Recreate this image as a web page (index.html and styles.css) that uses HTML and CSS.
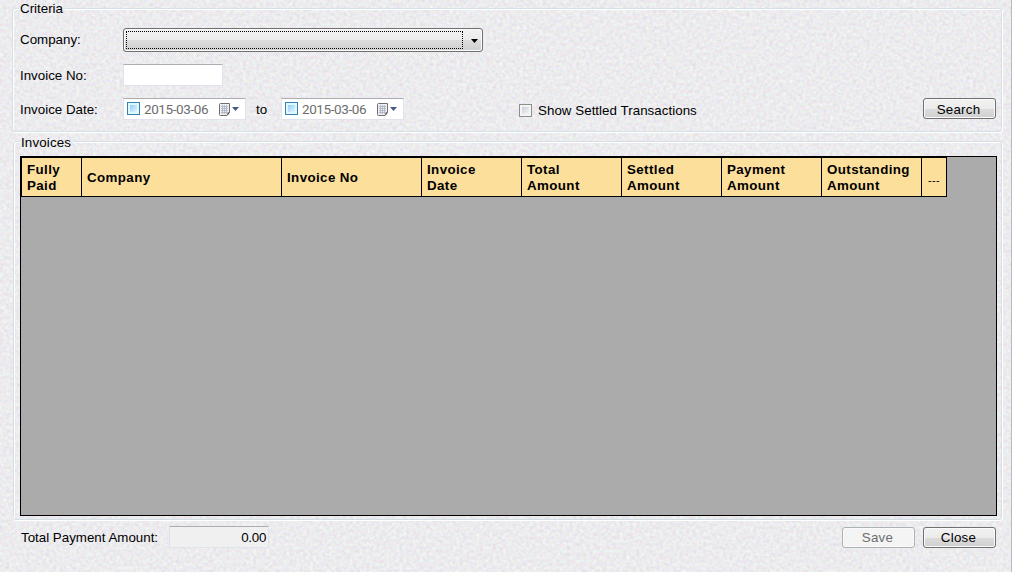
FILE: index.html
```html
<!DOCTYPE html>
<html lang="en">
<head>
<meta charset="utf-8">
<title>Invoices</title>
<link rel="stylesheet" href="styles.css">
</head>
<body>
<svg class="texture" width="1012" height="572" aria-hidden="true">
  <filter id="grain" x="0" y="0" width="100%" height="100%" color-interpolation-filters="sRGB">
    <feTurbulence type="fractalNoise" baseFrequency="0.3" numOctaves="2" seed="4"/>
    <feColorMatrix values="0.11 0.05 0 0 0.845  0 0.15 0 0 0.847  0 0.05 0.11 0 0.853  0 0 0 0 1"/>
  </filter>
  <rect width="1012" height="572" filter="url(#grain)"/>
</svg>
<main class="form">
  <section class="group criteria">
    <h2 class="legend">Criteria</h2>
    <div class="row row-company">
      <span class="label">Company:</span>
      <div class="combo"><span class="focus"></span><svg width="7" height="4"><path d="M0 0H7L3.5 4Z" fill="#000"/></svg></div>
    </div>
    <div class="row row-number">
      <span class="label">Invoice No:</span>
      <div class="field invoice-no"></div>
    </div>
    <div class="row row-date">
      <span class="label">Invoice Date:</span>
      <div class="field date"><span class="check blue"></span><span class="value">2015-03-06</span>
        <svg class="cal" width="22" height="14" viewBox="0 0 22 14"><path d="M.5 1.5Q.5 .5 1.5 .5H10.500V9L8 12.500H1.500Q.5 12.500 .5 11.500Z" fill="#edf0f5" stroke="#756b6b"/><path d="M11 9.500L8.500 12.500V9.500Z" fill="#564b4b"/><path d="M2 3.500H9M2 5.500H9M2 7.500H9M2 9.500H8M3.500 2V11M5.500 2V11M7.500 2V11" stroke="#a9b1c0" stroke-width=".8"/><path d="M13 4H20L16.500 8Z" fill="#465a85"/></svg></div>
      <span class="to">to</span>
      <div class="field date"><span class="check blue"></span><span class="value">2015-03-06</span>
        <svg class="cal" width="22" height="14" viewBox="0 0 22 14"><path d="M.5 1.5Q.5 .5 1.5 .5H10.500V9L8 12.500H1.500Q.5 12.500 .5 11.500Z" fill="#edf0f5" stroke="#756b6b"/><path d="M11 9.500L8.500 12.500V9.500Z" fill="#564b4b"/><path d="M2 3.500H9M2 5.500H9M2 7.500H9M2 9.500H8M3.500 2V11M5.500 2V11M7.500 2V11" stroke="#a9b1c0" stroke-width=".8"/><path d="M13 4H20L16.500 8Z" fill="#465a85"/></svg></div>
      <div class="settled"><span class="check"></span><span>Show Settled Transactions</span></div>
      <button class="button search">Search</button>
    </div>
  </section>
  <section class="group invoices">
    <h2 class="legend">Invoices</h2>
    <div class="grid">
      <div class="head">
        <div class="cell">Fully<br>Paid</div>
        <div class="cell">Company</div>
        <div class="cell">Invoice No</div>
        <div class="cell">Invoice<br>Date</div>
        <div class="cell">Total<br>Amount</div>
        <div class="cell">Settled<br>Amount</div>
        <div class="cell">Payment<br>Amount</div>
        <div class="cell">Outstanding<br>Amount</div>
        <div class="cell more">---</div>
      </div>
    </div>
  </section>
  <footer class="footer">
    <span class="total-label">Total Payment Amount:</span>
    <div class="field total">0.00</div>
    <button class="button save" disabled>Save</button>
    <button class="button close">Close</button>
  </footer>
</main>
</body>
</html>
```

FILE: styles.css
```css
* { box-sizing: border-box; }
body {
  margin: 0;
  width: 1012px;
  height: 572px;
  overflow: hidden;
  font: 13.33px/16px "Liberation Sans", Arial, sans-serif;
  color: #000;
  background: #ebebec;
}
svg { display: block; flex: none; }
.texture { position: absolute; left: 0; top: 0; }
.form {
  position: relative;
  height: 572px;
  padding: 0 9px 0 12px;
  border-right: 1px solid #b9bdc2;
}
.group { position: relative; width: 990px; }
.group::before {
  content: "";
  position: absolute;
  inset: 8px 0 0 0;
  border: 1px solid #d5dfe8;
  border-radius: 3px;
  box-shadow: 1px 1px 0 #fff, inset 1px 1px 0 #fff;
  clip-path: polygon(0 0, 7px 0, 7px 3px, var(--gap) 3px, var(--gap) 0, 101% 0, 101% 102%, 0 102%);
}
.criteria { --gap: 53px; height: 132px; padding: 0 6px 0 8px; }
.invoices { --gap: 61px; width: 989px; height: 388px; margin-left: 1px; padding-left: 7px; }
.invoices::before { top: 9px; }
.legend { position: relative; margin: 0; height: 16px; font: inherit; }
.criteria .legend { padding-top: 1px; }
.invoices .legend { padding: 3px 0 0 1px; height: 24px; letter-spacing: .15px; }
.row { position: relative; display: flex; align-items: center; }
.label { width: 103px; }
.row-number .label, .row-date .label { padding-top: 2px; }
.row-company { margin-top: 12px; height: 24px; }
.row-number { margin-top: 12px; height: 22px; }
.row-date { margin-top: 12px; height: 22px; }
.combo {
  display: flex;
  align-items: center;
  gap: 8px;
  width: 360px;
  height: 24px;
  padding: 0 3px 0 2px;
  border: 1px solid #707070;
  border-radius: 3px;
  background: linear-gradient(#f2f2f2, #ebebeb 50%, #dddddd 50%, #cfcfcf);
  box-shadow: inset 0 0 0 1px #fafafa;
}
.combo svg { margin-top: 1px; }
.focus { width: 337px; height: 18px; border: 1px dotted #000; }
.field {
  background: #fff;
  border: 1px solid #e2e3ea;
  border-top-color: #abadb3;
  border-radius: 1px;
}
.invoice-no { width: 100px; height: 22px; }
.date { display: flex; align-items: center; width: 123px; height: 22px; padding: 0 4px 1px 3px; }
.value { width: 76px; margin-left: 3px; padding-top: 1px; font-family: Roboto, sans-serif; font-size: 13.5px; letter-spacing: -.4px; color: #6d6d6d; }
.cal { margin-top: 2px; }
.check {
  flex: none;
  width: 13px;
  height: 13px;
  border: 1px solid #8e8f8f;
  background: linear-gradient(135deg, #cbcfd5, #f6f6f6) content-box, #f4f4f4;
  padding: 2px;
}
.check.blue { margin-right: 1px; border-color: #3c7fb1; background: linear-gradient(135deg, #8fcff6, #e8f6fd) content-box, #def9fa; padding: 2px; }
.to { width: 35px; padding: 2px 0 0 10px; }
.settled { display: flex; align-items: center; gap: 6px; margin-left: 115px; padding-top: 2px; white-space: nowrap; letter-spacing: .04px; }
.settled span:last-child { padding-top: 2px; }
.button {
  width: 73px;
  height: 21px;
  padding: 2px 2px 0 0;
  border: 1px solid #707070;
  border-radius: 3px;
  background: linear-gradient(#f2f2f2, #ebebeb 50%, #dddddd 50%, #cfcfcf);
  box-shadow: inset 0 0 0 1px #fafafa;
  font: 13.33px/16px "Liberation Sans", Arial, sans-serif;
  letter-spacing: .25px;
  color: #000;
}
.search { margin: 0 0 1px auto; }
.grid { position: relative; width: 977px; height: 360px; border: 1px solid #000; background: #ababab; }
.head {
  display: grid;
  grid-template-columns: 61px 200px 140px repeat(5, 100px) 25px;
  width: 926px;
  height: 40px;
  border-top: 1px solid #000;
}
.cell {
  display: flex;
  align-items: center;
  padding: 1px 0 0 5px;
  border: solid #000;
  border-width: 0 1px 1px 0;
  background: #fbdf9b;
  font-weight: bold;
  letter-spacing: .4px;
}
.cell:first-child { border-left-width: 1px; }
.more { font-weight: normal; font-size: 11px; padding: 6px 0 0 6px; letter-spacing: .3px; }
.footer { position: relative; display: flex; align-items: center; padding: 6px 6px 0 9px; width: 990px; }
.total-label { width: 148px; padding-top: 2px; white-space: nowrap; }
.total { width: 100px; height: 22px; padding: 3px 2px 0 0; background: #f0f0f0; text-align: right; letter-spacing: -.3px; }
.save { margin-left: auto; border-color: #adb2b5; background: #f4f4f4; color: #6d6d6d; }
.close { margin-left: 8px; }
```
